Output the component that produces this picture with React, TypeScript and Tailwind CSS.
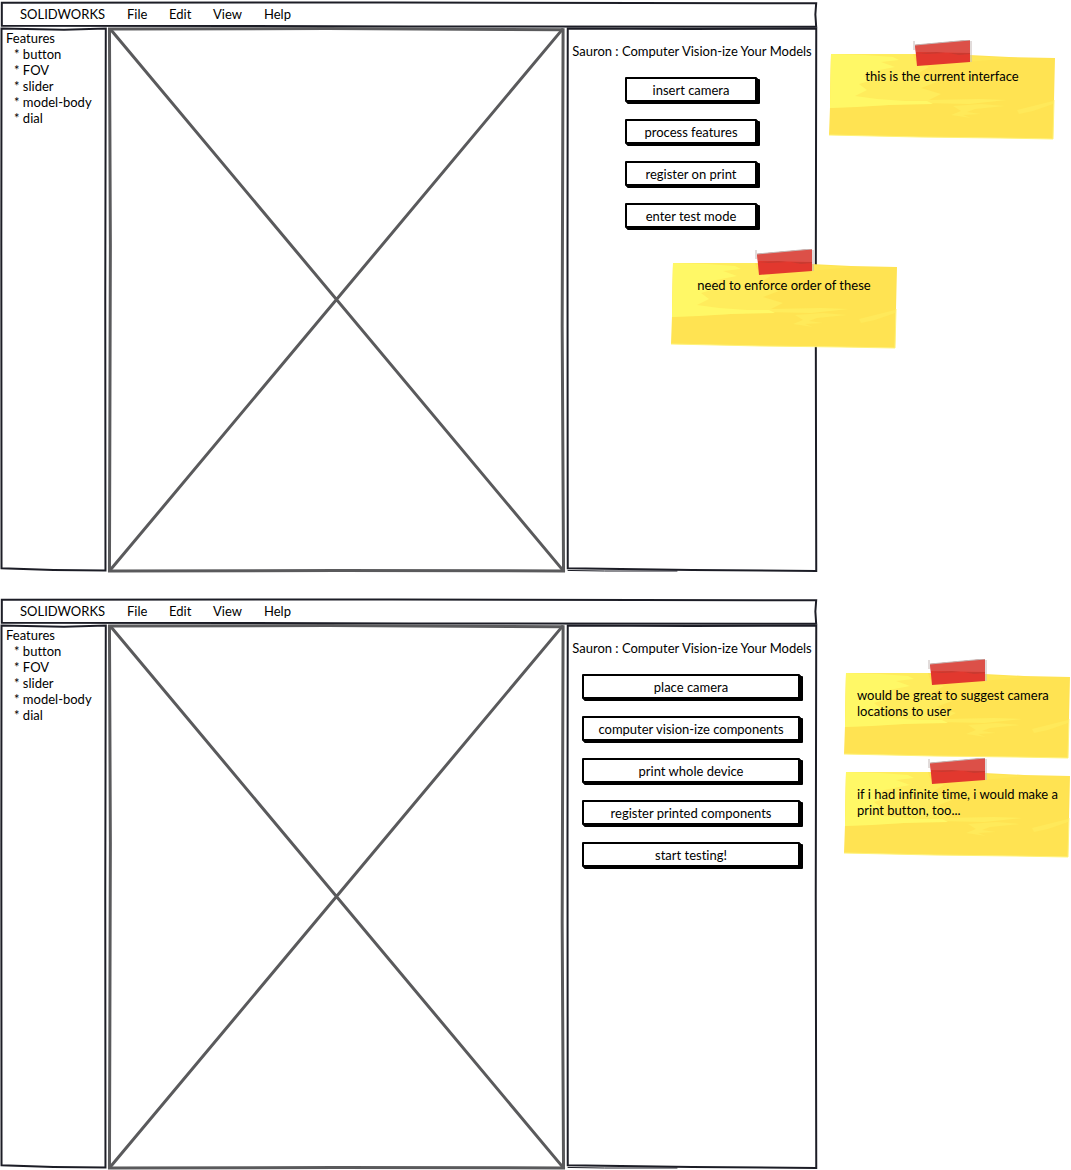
import type { ReactNode } from "react";

type Tone = "ink" | "gray";

const features = ["button", "FOV", "slider", "model-body", "dial"];

/* Hand-drawn outlines that stretch over their parent. */
const outlines = {
  bar: "M0.1 3L48 2L99.9 5L99.8 50L99.9 99L50 98L30 96L0.1 95Z",
  list: "M0.5 0.1L60 0.3L99.8 0.1L99.3 50L99.5 99.9L50 99.8L0.5 99.5L0.3 40Z",
  canvas: "M0.1 0.2L48 0.1L99.8 0.3L99.6 55L99.9 100L50 99.9L0.1 100L0.3 40Z",
  panel: "M0.3 0.1L50 0.2L99.7 0.1L99.5 50L99.7 100L50 99.8L0.3 99.5L0.2 40Z",
};

function SketchFrame({ shape, tone = "ink" }: { shape: keyof typeof outlines; tone?: Tone }) {
  return (
    <svg
      aria-hidden="true"
      className={
        tone === "ink"
          ? "pointer-events-none absolute inset-0 size-full overflow-visible text-[#1c1d26]"
          : "pointer-events-none absolute inset-0 size-full overflow-visible text-[#5a5a5c]"
      }
      viewBox="0 0 100 100"
      preserveAspectRatio="none"
      fill="none"
      stroke="currentColor"
      strokeLinecap="round"
    >
      {shape === "canvas" && (
        <path d="M0.5 0.4L99.6 99.7M99.6 0.3L0.5 99.6" strokeWidth="3" vectorEffect="non-scaling-stroke" />
      )}
      <path d={outlines[shape]} strokeWidth={tone === "ink" ? 2 : 3} vectorEffect="non-scaling-stroke" />
      {shape === "panel" && (
        <path d="M0.4 99.9L15 100L44 100" strokeWidth="1" vectorEffect="non-scaling-stroke" />
      )}
    </svg>
  );
}

function SketchButton({ children }: { children: ReactNode }) {
  return (
    <button
      type="button"
      className="h-[25px] w-full rounded-[1px] border-2 border-black bg-white text-center leading-5 shadow-[1px_1px_0_black,2px_2px_0_black,3px_2px_0_black]"
    >
      {children}
    </button>
  );
}

function StickyNote({ children, centered = false }: { children: ReactNode; centered?: boolean }) {
  return (
    <div className="relative h-[99px] w-[226px]">
      <svg aria-hidden="true" className="absolute inset-0" width="226" height="100" viewBox="0 0 226 100">
        <path d="M2 14L84 14L140 15L180 17L226 18L225 60L224 99L170 98L90 97L0 95L1 67Z" fill="#ffe352" />
        <path
          d="M2 14L84 14L86 20L100 27L88 34L108 42L92 48L112 54L100 60L150 59L178 60L140 64L92 63L60 65L1 68Z"
          fill="#ffec5c"
        />
        <path
          d="M2 14L36 15L64 17L70 20L52 22L66 27L40 32L34 36L44 40L30 44L38 50L26 56L48 59L76 61L98 61L104 64L60 65L28 67L1 68Z"
          fill="#fff866"
        />
        <path d="M84 16L140 16L180 18L150 21L100 24Z" fill="#ffe757" />
        <path d="M124 66L152 64L176 66L146 69L138 72L152 74L134 75L142 78L122 75L132 71Z" fill="#ffea5a" />
        <path d="M188 70L224 61L224 64L204 71L190 74Z" fill="#ffe95a" />
        <path d="M0 95L90 97L170 98L224 99L225 60" stroke="#fff27a" fill="none" />
        <path d="M86 5L141 0L141 22L88 26Z" fill="#e2382e" />
        <path d="M86 5L141 0L141 13L87 12Z" fill="#dc5048" />
        <path d="M87 13L108 12L116 13L98 14ZM120 13L141 13L141 14L130 15Z" fill="#c93a30" />
        <path d="M85 1V10M86 5L141 0M142 1V22" stroke="#c4b8b6" fill="none" />
      </svg>
      <p className={centered ? "relative pt-7 text-center leading-4" : "relative pt-7 pr-3 pl-[13px] leading-4"}>
        {children}
      </p>
    </div>
  );
}

function MockWindow({ actions, wide = false, children }: { actions: string[]; wide?: boolean; children?: ReactNode }) {
  return (
    <section className="relative flex min-w-0 flex-1 flex-col gap-px">
      <nav className="relative flex h-[25px] items-center gap-[23px] pl-[19px]">
        <SketchFrame shape="bar" />
        <span className="w-[84px]">SOLIDWORKS</span>
        <a href="#file" className="w-[19px]">File</a>
        <a href="#edit" className="w-[21px]">Edit</a>
        <a href="#view" className="w-7">View</a>
        <a href="#help">Help</a>
      </nav>
      <div className="flex h-[543px] gap-[3px]">
        <aside className="relative w-[105px] shrink-0 px-[5px] pt-[2px] leading-4">
          <SketchFrame shape="list" />
          <h2>Features</h2>
          <ul className="pl-2">
            {features.map((name) => (
              <li key={name}>* {name}</li>
            ))}
          </ul>
        </aside>
        <div className="relative min-w-0 flex-1">
          <SketchFrame shape="canvas" tone="gray" />
        </div>
        <aside className="relative flex w-[250px] shrink-0 flex-col items-center pt-[13px]">
          <SketchFrame shape="panel" />
          <h2 className="leading-5 whitespace-nowrap">Sauron : Computer Vision-ize Your Models</h2>
          <div
            className={
              wide
                ? "mt-4 mr-[2px] flex w-[218px] flex-col gap-[17px]"
                : "mt-4 mr-[2px] flex w-[132px] flex-col gap-[17px]"
            }
          >
            {actions.map((label) => (
              <SketchButton key={label}>{label}</SketchButton>
            ))}
          </div>
        </aside>
      </div>
      {children}
    </section>
  );
}

export default function App() {
  return (
    <main className="flex flex-col gap-7 bg-white py-[2px] pl-px font-['Lato',sans-serif] text-[13px] text-black [font-variant-ligatures:none]">
      <div className="flex">
        <MockWindow actions={["insert camera", "process features", "register on print", "enter test mode"]}>
          <div className="absolute top-[247px] -right-20">
            <StickyNote centered>need to enforce order of these</StickyNote>
          </div>
        </MockWindow>
        <div className="w-[254px] shrink-0 pt-[38px] pl-3">
          <StickyNote centered>this is the current interface</StickyNote>
        </div>
      </div>
      <div className="flex">
        <MockWindow
          wide
          actions={[
            "place camera",
            "computer vision-ize components",
            "print whole device",
            "register printed components",
            "start testing!",
          ]}
        />
        <div className="w-[254px] shrink-0 pt-[60px] pl-[27px]">
          <StickyNote>would be great to suggest camera locations to user</StickyNote>
          <StickyNote>if i had infinite time, i would make a print button, too...</StickyNote>
        </div>
      </div>
    </main>
  );
}
